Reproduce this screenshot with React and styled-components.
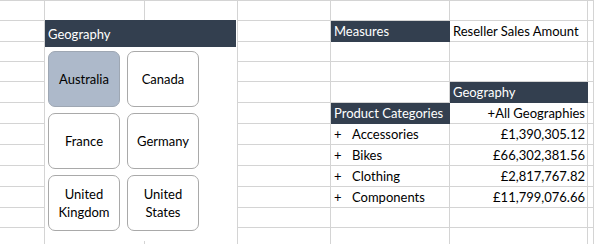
import React from 'react'
import styled, { createGlobalStyle } from 'styled-components'

const GlobalStyle = createGlobalStyle`
  body {
    margin: 0;
    font-family: Lato, "Open Sans", sans-serif;
    background: #fff;
  }
`

const LINE = '#d4d4d4'
const DARK = '#333f4f'

const Sheet = styled.div`
  position: relative;
  width: 594px;
  height: 244px;
  overflow: hidden;
  background: #fff;
`

const Grid = styled.div`
  display: grid;
  grid-template-columns: 45px 100px 93px 93px 119px 138px 1fr;
  grid-template-rows: 20px 21px 20px 20px 21px 21px 21px 21px 21px 21px 20px 20px;
  border-top: 1px solid ${LINE};
`

const Cell = styled.div`
  box-sizing: border-box;
  display: flex;
  align-items: center;
  justify-content: ${({ $right }) => ($right ? 'flex-end' : 'flex-start')};
  padding: 0 2px 0 3px;
  font-size: 13px;
  white-space: nowrap;
  overflow: hidden;
  color: ${({ $dark }) => ($dark ? '#fff' : '#000')};
  background: ${({ $dark }) => ($dark ? DARK : '#fff')};
  border-right: 1px solid ${({ $dark }) => ($dark ? DARK : LINE)};
  border-bottom: 1px solid ${({ $dark }) => ($dark ? DARK : LINE)};
`

const Expand = styled.span`
  display: inline-block;
  width: 18px;
`

const Slicer = styled.div`
  position: absolute;
  left: 45px;
  top: 20px;
  width: 192px;
  height: 221px;
  background: #fff;
  display: flex;
  flex-direction: column;
`

const SlicerHeader = styled.div`
  height: 27px;
  background: ${DARK};
  color: #fff;
  font-size: 13px;
  display: flex;
  align-items: center;
  padding-left: 3px;
  margin-right: 1px;
`

const Buttons = styled.div`
  display: grid;
  grid-template-columns: 72px 72px;
  grid-auto-rows: 56px;
  column-gap: 7px;
  row-gap: 6px;
  padding: 4px 0 0 3px;
`

const SlicerButton = styled.div`
  box-sizing: border-box;
  display: flex;
  align-items: center;
  justify-content: center;
  text-align: center;
  font-size: 13px;
  line-height: 18px;
  color: #000;
  border: 1px solid ${({ $selected }) => ($selected ? '#9ea7b3' : '#a9a9a9')};
  border-radius: 7px;
  background: ${({ $selected }) => ($selected ? '#adb9ca' : '#fff')};
`

const countries = [
  { name: 'Australia', selected: true },
  { name: 'Canada' },
  { name: 'France' },
  { name: 'Germany' },
  { name: 'United Kingdom', wrap: ['United', 'Kingdom'] },
  { name: 'United States', wrap: ['United', 'States'] },
]

const categories = [
  ['Accessories', '£1,390,305.12'],
  ['Bikes', '£66,302,381.56'],
  ['Clothing', '£2,817,767.82'],
  ['Components', '£11,799,076.66'],
]

// content by row index -> column index
const cells = {
  1: { 4: { text: 'Measures', dark: true }, 5: { text: 'Reseller Sales Amount' } },
  4: { 5: { text: 'Geography', dark: true } },
  5: {
    4: { text: 'Product Categories', dark: true },
    5: { text: '+All Geographies', right: true },
  },
}
categories.forEach(([label, value], i) => {
  cells[6 + i] = {
    4: { label },
    5: { text: value, right: true },
  }
})

const App = () => {
  const rows = []
  for (let r = 0; r < 12; r++) {
    for (let c = 0; c < 7; c++) {
      const info = (cells[r] && cells[r][c]) || {}
      rows.push(
        <Cell key={`${r}-${c}`} $dark={info.dark} $right={info.right}>
          {info.label ? (
            <>
              <Expand>+</Expand>
              {info.label}
            </>
          ) : (
            info.text
          )}
        </Cell>
      )
    }
  }

  return (
    <>
      <GlobalStyle />
      <Sheet>
        <Grid>{rows}</Grid>
        <Slicer>
          <SlicerHeader>Geography</SlicerHeader>
          <Buttons>
            {countries.map((c) => (
              <SlicerButton key={c.name} $selected={c.selected}>
                {c.wrap ? (
                  <span>
                    {c.wrap[0]}
                    <br />
                    {c.wrap[1]}
                  </span>
                ) : (
                  c.name
                )}
              </SlicerButton>
            ))}
          </Buttons>
        </Slicer>
      </Sheet>
    </>
  )
}

export default App
